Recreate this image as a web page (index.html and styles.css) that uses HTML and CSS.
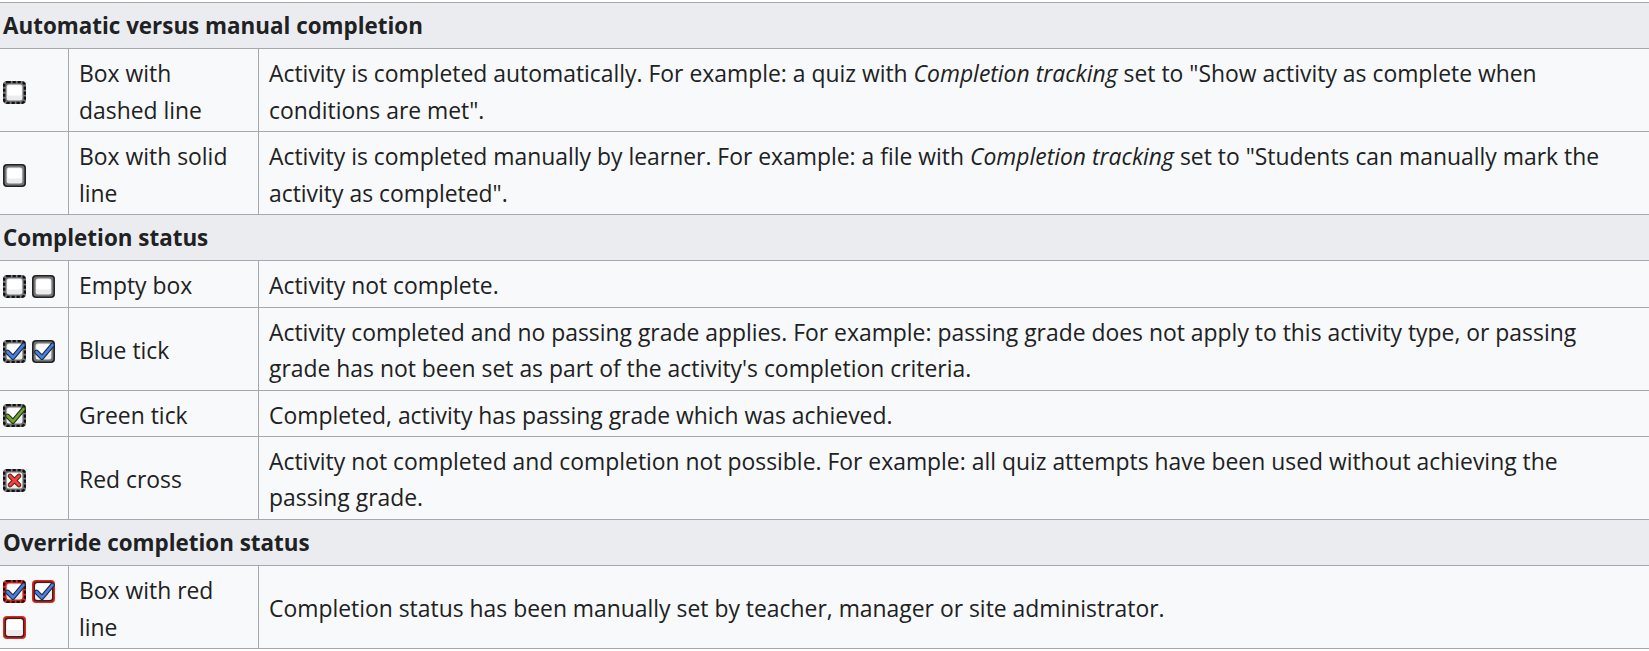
FILE: index.html
```html
<!DOCTYPE html>
<html lang="en">
<head>
<meta charset="utf-8">
<title>Activity completion icons</title>
<link rel="stylesheet" href="styles.css">
</head>
<body>
<svg class="defs" aria-hidden="true">
  <defs>
    <symbol id="box-solid" viewBox="0 0 23 23">
      <rect x="0" y="0" width="23" height="23" rx="4" fill="#222222"/>
      <rect x="1.6" y="1.6" width="19.8" height="19.8" rx="3" fill="#777777"/>
      <rect x="3.6" y="3.6" width="15.8" height="15.8" rx="2.5" fill="#ececec"/>
      <rect x="4.5" y="4.5" width="14" height="10" rx="2" fill="#ffffff"/>
    </symbol>
    <symbol id="box-dashed" viewBox="0 0 23 23">
      <rect x="0" y="0" width="23" height="23" rx="4" fill="#777777"/>
      <rect x="1.1" y="1.1" width="20.8" height="20.8" rx="3.5" fill="none" stroke="#111111" stroke-width="2.4" stroke-dasharray="3.2 1.8"/>
      <rect x="3.6" y="3.6" width="15.8" height="15.8" rx="2.5" fill="#ececec"/>
      <rect x="4.5" y="4.5" width="14" height="10" rx="2" fill="#ffffff"/>
    </symbol>
    <symbol id="box-solid-red" viewBox="0 0 23 23">
      <rect x="0" y="0" width="23" height="23" rx="4" fill="#e3241b"/>
      <rect x="1.6" y="1.6" width="19.8" height="19.8" rx="3" fill="#3a2020"/>
      <rect x="3" y="3" width="17" height="17" rx="2.5" fill="#ececec"/>
      <rect x="4" y="4" width="15" height="10" rx="2" fill="#ffffff"/>
    </symbol>
    <symbol id="box-dashed-red" viewBox="0 0 23 23">
      <rect x="0" y="0" width="23" height="23" rx="4" fill="#e3241b"/>
      <rect x="1.1" y="1.1" width="20.8" height="20.8" rx="3.5" fill="none" stroke="#111111" stroke-width="2.4" stroke-dasharray="3.2 1.8"/>
      <rect x="3.6" y="3.6" width="15.8" height="15.8" rx="2.5" fill="#ececec"/>
      <rect x="4.5" y="4.5" width="14" height="10" rx="2" fill="#ffffff"/>
    </symbol>
    <symbol id="tick-blue" viewBox="0 0 23 23">
      <path d="M4.5 12 L10 17.5 L20.5 5" fill="none" stroke="#1d2b44" stroke-width="4.8" stroke-linecap="round" stroke-linejoin="round"/>
      <path d="M4.5 12 L10 17.5 L20.5 5" fill="none" stroke="#4a80e2" stroke-width="2.6" stroke-linecap="round" stroke-linejoin="round"/>
    </symbol>
    <symbol id="tick-green" viewBox="0 0 23 23">
      <path d="M4.5 12 L10 17.5 L20.5 5" fill="none" stroke="#22321a" stroke-width="4.8" stroke-linecap="round" stroke-linejoin="round"/>
      <path d="M4.5 12 L10 17.5 L20.5 5" fill="none" stroke="#72a62e" stroke-width="2.6" stroke-linecap="round" stroke-linejoin="round"/>
    </symbol>
    <symbol id="cross-red" viewBox="0 0 23 23">
      <path d="M7 7 L16 16 M16 7 L7 16" fill="none" stroke="#5a2222" stroke-width="4.6" stroke-linecap="round"/>
      <path d="M7 7 L16 16 M16 7 L7 16" fill="none" stroke="#f0413a" stroke-width="2.6" stroke-linecap="round"/>
    </symbol>
  </defs>
</svg>

<div class="page">
  <table class="wikitable">
    <colgroup>
      <col class="col-icon">
      <col class="col-name">
      <col class="col-desc">
    </colgroup>
    <tbody>
      <tr class="section">
        <th colspan="3">Automatic versus manual completion</th>
      </tr>
      <tr>
        <td><div class="icon-set"><svg class="ico"><use href="#box-dashed"/></svg></div></td>
        <td>Box with dashed line</td>
        <td class="desc">Activity is completed automatically. For example: a quiz with <i>Completion tracking</i> set to "Show activity as complete when conditions are met".</td>
      </tr>
      <tr>
        <td><div class="icon-set"><svg class="ico"><use href="#box-solid"/></svg></div></td>
        <td>Box with solid line</td>
        <td class="desc">Activity is completed manually by learner. For example: a file with <i>Completion tracking</i> set to "Students can manually mark the activity as completed".</td>
      </tr>
      <tr class="section">
        <th colspan="3">Completion status</th>
      </tr>
      <tr>
        <td><div class="icon-set"><svg class="ico"><use href="#box-dashed"/></svg><svg class="ico"><use href="#box-solid"/></svg></div></td>
        <td>Empty box</td>
        <td class="desc">Activity not complete.</td>
      </tr>
      <tr>
        <td><div class="icon-set"><svg class="ico"><use href="#box-dashed"/><use href="#tick-blue"/></svg><svg class="ico"><use href="#box-solid"/><use href="#tick-blue"/></svg></div></td>
        <td>Blue tick</td>
        <td class="desc">Activity completed and no passing grade applies. For example: passing grade does not apply to this activity type, or passing grade has not been set as part of the activity's completion criteria.</td>
      </tr>
      <tr>
        <td><div class="icon-set"><svg class="ico"><use href="#box-dashed"/><use href="#tick-green"/></svg></div></td>
        <td>Green tick</td>
        <td class="desc">Completed, activity has passing grade which was achieved.</td>
      </tr>
      <tr>
        <td><div class="icon-set"><svg class="ico"><use href="#box-dashed"/><use href="#cross-red"/></svg></div></td>
        <td>Red cross</td>
        <td class="desc">Activity not completed and completion not possible. For example: all quiz attempts have been used without achieving the passing grade.</td>
      </tr>
      <tr class="section">
        <th colspan="3">Override completion status</th>
      </tr>
      <tr>
        <td><div class="icon-set"><svg class="ico"><use href="#box-dashed-red"/><use href="#tick-blue"/></svg><svg class="ico"><use href="#box-solid-red"/><use href="#tick-blue"/></svg><svg class="ico"><use href="#box-solid-red"/></svg></div></td>
        <td>Box with red line</td>
        <td class="desc">Completion status has been manually set by teacher, manager or site administrator.</td>
      </tr>
    </tbody>
  </table>
</div>
</body>
</html>
```

FILE: styles.css
```css
html, body {
  margin: 0;
  padding: 0;
  background: #ffffff;
}

.defs {
  display: block;
  width: 0;
  height: 0;
  overflow: hidden;
}

.page {
  overflow: hidden;
  width: 1649px;
  height: 651px;
  padding-top: 2px;
  box-sizing: border-box;
}

.wikitable {
  margin-left: -8px;
  width: 1670px;
  table-layout: fixed;
  border-collapse: collapse;
  background: #f8f9fa;
  color: #202122;
  font-family: "Open Sans", "Noto Sans", sans-serif;
  font-size: 22.9px;
  line-height: 36.4px;
  border: 1px solid #a2a9b1;
}

.col-icon { width: 76px; }
.col-name { width: 190px; }

.wikitable th,
.wikitable td {
  border: 1px solid #a2a9b1;
  vertical-align: middle;
  text-align: left;
}

.wikitable td {
  padding: 7px 10px 2px 10px;
}

.wikitable th {
  padding: 5px 10px 4px 10px;
  background: #eaecf0;
  font-weight: 700;
  font-size: 22.4px;
}

.wikitable td.desc {
  padding-right: 40px;
}

.icon-set {
  display: flex;
  flex-wrap: wrap;
  column-gap: 6px;
  row-gap: 13.4px;
}

.ico {
  display: block;
  width: 23px;
  height: 23px;
}
```
